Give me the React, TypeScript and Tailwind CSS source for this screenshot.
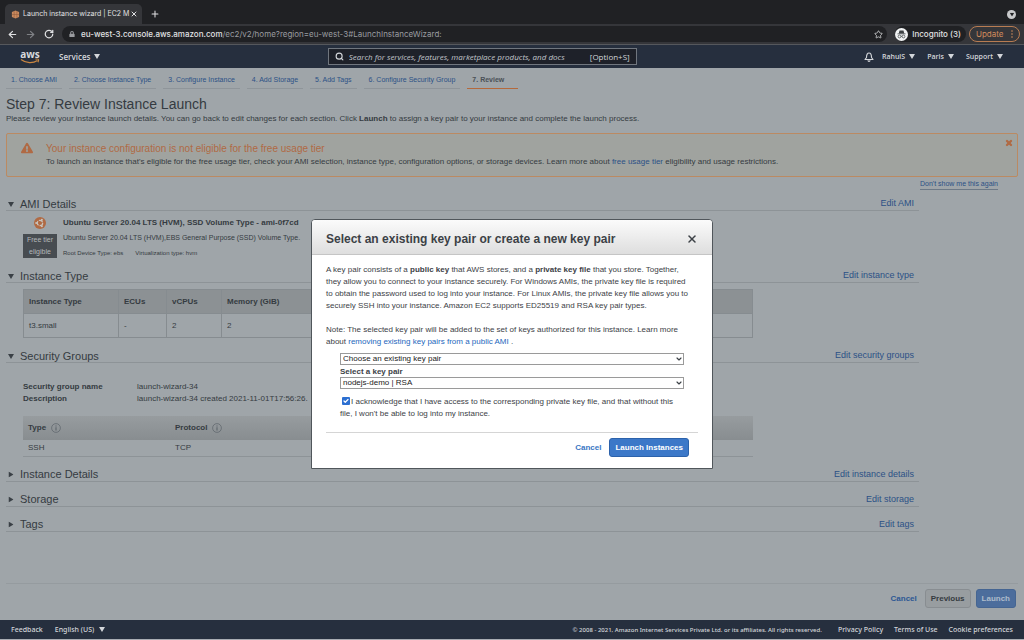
import type { ReactNode } from 'react'
import { ArrowLeft, ArrowRight, Check, ChevronDown, Plus, RotateCw, Search, Star, X } from 'lucide-react'
import { FaExclamationTriangle, FaLock } from 'react-icons/fa'

const steps = [
  '1. Choose AMI',
  '2. Choose Instance Type',
  '3. Configure Instance',
  '4. Add Storage',
  '5. Add Tags',
  '6. Configure Security Group',
]

function Caret({ className = '' }: { className?: string }) {
  return (
    <svg viewBox="0 0 6 5" className={`inline-block h-[5px] w-[6px] shrink-0 fill-current ${className}`} aria-hidden="true">
      <path d="M0 0h6L3 5z" />
    </svg>
  )
}

function InfoIcon() {
  return (
    <svg viewBox="0 0 10 10" className="size-[10px] shrink-0" fill="none" stroke="#5d646b" aria-hidden="true">
      <circle cx="5" cy="5" r="4.4" strokeWidth="0.7" />
      <path d="M5 4.2v3.2M5 2.4v1" strokeWidth="1.1" />
    </svg>
  )
}

function BrowserBar() {
  return (
    <header className="bg-[#202124] font-[Inter,sans-serif] text-[8px] leading-[10px] text-[#e0e1e3]">
      <div className="flex h-6 items-end pl-[5px] pr-2">
        <div className="flex h-5 w-[137px] items-center rounded-t-[5px] bg-[#35363a] pl-[6px] pr-[4px]">
          <svg viewBox="0 0 10 10" className="mr-[3px] size-[9px] shrink-0" aria-hidden="true">
            <path d="M1 2.2 5 .5l4 1.7v5.6L5 9.5 1 7.8z" fill="#c98a5e" />
            <path d="M3.5 1.5v7M6.5 1.5v7M1 5h8" stroke="#8f5a3c" strokeWidth="0.6" />
          </svg>
          <span className="flex-1 whitespace-nowrap text-[7px]">Launch instance wizard | EC2 M</span>
          <button aria-label="Close tab" className="shrink-0">
            <X className="size-[8px]" strokeWidth={3} />
          </button>
        </div>
        <button aria-label="New tab" className="mb-[5px] ml-2">
          <Plus className="size-[10px]" strokeWidth={2.5} />
        </button>
        <button aria-label="Search tabs" className="mb-[5px] ml-auto flex size-[9px] items-center justify-center rounded-full bg-[#c8c9cb] text-[#202124]">
          <Caret className="scale-75" />
        </button>
      </div>
      <div className="flex h-[21px] items-center border-b border-[#56585c] bg-[#35363a] pl-[7px] pr-[4px]">
        <button aria-label="Back">
          <ArrowLeft className="size-[11px]" strokeWidth={2.5} />
        </button>
        <button aria-label="Forward" className="ml-[7px] text-[#808286]">
          <ArrowRight className="size-[11px]" strokeWidth={2.5} />
        </button>
        <button aria-label="Reload" className="ml-2">
          <RotateCw className="size-[10px]" strokeWidth={3} />
        </button>
        <div className="ml-2 flex h-4 flex-1 items-center rounded-full bg-[#202124] pl-[7px] pr-[4px]">
          <FaLock className="mr-[6px] size-[6px] text-[#9a9ca0]" />
          <span className="font-medium">eu-west-3.console.aws.amazon.com</span>
          <span className="text-[#9a9ca0]">/ec2/v2/home?region=eu-west-3#LaunchInstanceWizard:</span>
          <button aria-label="Bookmark" className="ml-auto">
            <Star className="size-[9px]" strokeWidth={2} />
          </button>
        </div>
        <div className="ml-[8px] flex h-4 items-center gap-[4px] rounded-full bg-[#202124] pr-[5px] font-medium">
          <svg viewBox="0 0 13 13" className="size-[13px]" aria-hidden="true">
            <circle cx="6.5" cy="6.5" r="6.5" fill="#f1f3f4" />
            <path d="M4.5 2.5h4l.7 2.8H3.8zM2.500 5.500h8v.8h-8z" fill="#3c4043" />
            <g fill="none" stroke="#3c4043" strokeWidth="0.7">
              <circle cx="4.5" cy="8.5" r="1.4" />
              <circle cx="8.5" cy="8.5" r="1.4" />
              <path d="M5.9 8.3h1.2" />
            </g>
          </svg>
          Incognito (3)
        </div>
        <button className="ml-[3px] flex h-4 w-[51px] items-center justify-between rounded-full border border-[#b87c52] pl-[6px] pr-[6px] text-[#cf8b5c]">
          Update
          <svg viewBox="0 0 2 8" className="h-2 w-[2px] fill-current" aria-hidden="true">
            <circle cx="1" cy="1" r="0.8" />
            <circle cx="1" cy="4" r="0.8" />
            <circle cx="1" cy="7" r="0.8" />
          </svg>
        </button>
      </div>
    </header>
  )
}

function ConsoleNav() {
  return (
    <nav className="flex h-[23px] items-center bg-[#262f3e] pl-5 pr-[21px] font-['Open_Sans',sans-serif] text-[7px] font-semibold leading-[10px] text-[#d3d6da]">
      <a href="#" aria-label="aws" className="flex w-5 flex-col items-center pt-px text-[#d8dadd]">
        <span className="text-[10px] font-bold leading-[7px]">aws</span>
        <svg viewBox="0 0 20 6" className="h-[6px] w-5" fill="none" stroke="#c98642" strokeWidth="1.2" aria-hidden="true">
          <path d="M1 1.5c5 4 12 4 16.5 1M15.5 1.2c3-.6 3.8 0 2.5 3" />
        </svg>
      </a>
      <button className="ml-[19px] flex items-center gap-1 text-[8px]">
        Services <Caret />
      </button>
      <div className="ml-auto flex h-[17px] w-[309px] items-center border border-[#70767e] bg-[#1e2129] px-[6px] text-[8px]">
        <Search className="mr-[5px] size-[9px] shrink-0" strokeWidth={3} />
        <input
          aria-label="Search"
          placeholder="Search for services, features, marketplace products, and docs"
          className="min-w-0 flex-1 bg-transparent font-medium italic outline-none placeholder:text-[#c4c8cd]"
        />
        <span className="font-medium">[Option+S]</span>
      </div>
      <div className="ml-auto flex items-center gap-[12px]">
        <div className="flex items-center gap-[8px]">
          <button aria-label="Notifications">
            <svg viewBox="0 0 10 10" className="size-[10px]" fill="none" stroke="currentColor" strokeWidth="1.1" strokeLinejoin="round" aria-hidden="true">
              <path d="M1 7.5 2.5 5.5C2.5 2.5 3.5 1 5 1s2.500 1.500 2.500 4.500L9 7.500zM4 8.200c0 1.500 2 1.500 2 0" />
            </svg>
          </button>
          <button className="flex items-center gap-1">RahulS <Caret /></button>
        </div>
        <button className="flex items-center gap-1">Paris <Caret /></button>
        <button className="flex items-center gap-1">Support <Caret /></button>
      </div>
    </nav>
  )
}

function Section({ title, edit, open = false, children }: { title: string; edit: string; open?: boolean; children?: ReactNode }) {
  return (
    <section>
      <div className="flex h-[13px] items-center border-b border-[#8d9397] pl-[2px] pr-[5px]">
        <button aria-label={title} aria-expanded={open} className="flex w-3 text-[#3a4046]">
          <Caret className={open ? '' : '-rotate-90'} />
        </button>
        <h2 className="text-[11px]">{title}</h2>
        <a href="#" className="ml-auto text-[9px] text-[#2c5186]">{edit}</a>
      </div>
      {children}
    </section>
  )
}

function KeyPairSelect({ id, value }: { id: string; value: string }) {
  return (
    <div className="relative">
      <select id={id} aria-label={value} className="block h-[12px] w-full appearance-none border border-[#9a9a9a] bg-white px-[2px] text-[8px] leading-[10px] text-[#222]">
        <option>{value}</option>
      </select>
      <ChevronDown className="pointer-events-none absolute right-px top-[2px] size-2" strokeWidth={3.5} />
    </div>
  )
}

function KeyPairDialog() {
  return (
    <div role="dialog" aria-labelledby="dialog-title" className="w-[402px] rounded-t-[4px] border border-[#50565b] bg-white text-[8px] leading-3 text-[#3c4146]">
      <div className="flex h-[35px] items-center justify-between rounded-t-[3px] border-b border-[#c5c5c5] bg-linear-to-b from-[#fbfbfb] to-[#dedede] pl-[14px] pr-[14px] pt-[3px]">
        <h2 id="dialog-title" className="text-[12px] font-bold">Select an existing key pair or create a new key pair</h2>
        <button aria-label="Close">
          <X className="size-[12px]" strokeWidth={3} />
        </button>
      </div>
      <div className="px-[14px] pt-[9px]">
        <p>
          A key pair consists of a <b>public key</b> that AWS stores, and a <b>private key file</b> that you store. Together,
          <br />
          they allow you to connect to your instance securely. For Windows AMIs, the private key file is required
          <br />
          to obtain the password used to log into your instance. For Linux AMIs, the private key file allows you to
          <br />
          securely SSH into your instance. Amazon EC2 supports ED25519 and RSA key pair types.
        </p>
        <p className="mt-3">
          Note: The selected key pair will be added to the set of keys authorized for this instance. Learn more
          <br />
          about <a href="#" className="text-[#2467bd]">removing existing key pairs from a public AMI</a> .
        </p>
        <div className="mt-[5px] pl-[14px] pr-[14px]">
          <KeyPairSelect id="mode" value="Choose an existing key pair" />
          <label htmlFor="pair" className="block pt-px font-bold leading-[11px]">Select a key pair</label>
          <KeyPairSelect id="pair" value="nodejs-demo | RSA" />
          <label className="mt-[7px] block">
            <span className="relative ml-[2px] mr-px inline-block size-2 align-[-1px]">
              <input type="checkbox" defaultChecked className="block size-2 appearance-none rounded-[1px] bg-[#2c6fd1]" />
              <Check className="pointer-events-none absolute inset-px size-[6px] text-white" strokeWidth={5} />
            </span>
            I acknowledge that I have access to the corresponding private key file, and that without this
            <br />
            file, I won't be able to log into my instance.
          </label>
        </div>
        <div className="mt-3 flex items-center justify-end gap-2 border-t border-[#d5d5d5] pb-[11px] pr-[9px] pt-[5px] font-bold">
          <button className="text-[#3a76c4]">Cancel</button>
          <button className="h-[19px] rounded-[3px] border border-[#2c62ab] bg-[#3c78c8] px-[5px] text-white">Launch Instances</button>
        </div>
      </div>
    </div>
  )
}

export default function App() {
  return (
    <div className="flex min-h-screen flex-col bg-[#9fa5a9] font-['Liberation_Sans',Arial,sans-serif] text-[#353b41]">
      <BrowserBar />
      <ConsoleNav />
      <main className="relative flex flex-1 flex-col px-[6px]">
        <ol className="flex gap-[7px] pt-[4px] text-[7px] leading-[16px] text-[#2c5186]">
          {steps.map((step) => (
            <li key={step} className="border-b border-[#8f959a] px-[5px]">
              <a href="#">{step}</a>
            </li>
          ))}
          <li className="border-b border-[#b4693c] pl-[5px] pr-[14px] font-bold text-[#4a5056]">7. Review</li>
        </ol>
        <h1 className="mt-[7px] text-[14px] leading-[16px]">Step 7: Review Instance Launch</h1>
        <p className="mt-px text-[8px] leading-[12px]">
          Please review your instance launch details. You can go back to edit changes for each section. Click <b>Launch</b> to assign a key pair to your instance and complete the launch process.
        </p>
        <div className="mt-[8px] flex h-[44px] items-start rounded-[2px] border border-[#bb8a62] bg-[#a0a39f] pl-[14px] pr-[4px] pt-[8px]">
          <FaExclamationTriangle className="size-[12px] text-[#b06a44]" />
          <div className="ml-[13px] flex-1">
            <h3 className="text-[10px] leading-[14px] text-[#b06a44]">Your instance configuration is not eligible for the free usage tier</h3>
            <p className="text-[8px] leading-[12px]">
              To launch an instance that's eligible for the free usage tier, check your AMI selection, instance type, configuration options, or storage devices. Learn more about{' '}
              <a href="#" className="text-[#2c5186]">free usage tier</a> eligibility and usage restrictions.
            </p>
          </div>
          <button aria-label="Dismiss" className="-mt-[3px] text-[#b06a44]">
            <X className="size-[8px]" strokeWidth={7} />
          </button>
        </div>
        <a href="#" className="mr-5 mt-[2px] self-end border-b border-[#6d7986] text-[7px] leading-[10px] text-[#2c5186]">Don't show me this again</a>

        <div className="mr-[99px] mt-2">
          <Section title="AMI Details" edit="Edit AMI" open>
            <div className="flex h-[59px] pl-[17px] pt-[6px]">
              <div className="flex w-[34px] flex-col items-center">
                <svg viewBox="0 0 12 12" className="mb-[5px] size-[12px]" fill="none" aria-hidden="true">
                  <circle cx="6" cy="6" r="6" fill="#b06a44" />
                  <circle cx="6" cy="6" r="2.7" stroke="#c9c4bd" strokeWidth="1.2" strokeDasharray="4.6 1" />
                  <circle cx="2.2" cy="6" r="1" fill="#c9c4bd" />
                  <circle cx="7.9" cy="2.7" r="1" fill="#c9c4bd" />
                  <circle cx="7.9" cy="9.3" r="1" fill="#c9c4bd" />
                </svg>
                <span className="h-6 w-full bg-[#474c51] text-center text-[7px] leading-3 text-[#b4b8bb]">Free tier eligible</span>
              </div>
              <div className="ml-[6px] whitespace-nowrap">
                <h3 className="text-[8px] font-bold leading-3">Ubuntu Server 20.04 LTS (HVM), SSD Volume Type - ami-0f7cd</h3>
                <p className="mt-[3px] text-[7px] leading-3">Ubuntu Server 20.04 LTS (HVM),EBS General Purpose (SSD) Volume Type.</p>
                <p className="mt-[3px] flex gap-[12px] text-[6px] leading-3">
                  <span>Root Device Type: ebs</span>
                  <span>Virtualization type: hvm</span>
                </p>
              </div>
            </div>
          </Section>

          <Section title="Instance Type" edit="Edit instance type" open>
            <table className="ml-[17px] mt-[6px] w-4/5 table-fixed border-collapse text-left text-[8px] leading-3">
              <thead>
                <tr className="h-6 bg-[#8c9194]">
                  <th className="w-[95px] border border-[#868c90] px-[5px]">Instance Type</th>
                  <th className="w-[48px] border border-[#868c90] px-[5px]">ECUs</th>
                  <th className="w-[55px] border border-[#868c90] px-[5px]">vCPUs</th>
                  <th className="border border-[#868c90] px-[5px]">Memory (GiB)</th>
                </tr>
              </thead>
              <tbody>
                <tr className="h-6">
                  <td className="border border-[#868c90] px-[5px]">t3.small</td>
                  <td className="border border-[#868c90] px-[5px]">-</td>
                  <td className="border border-[#868c90] px-[5px]">2</td>
                  <td className="border border-[#868c90] px-[5px]">2</td>
                </tr>
              </tbody>
            </table>
          </Section>

          <div className="h-3" />
          <Section title="Security Groups" edit="Edit security groups" open>
            <dl className="grid grid-cols-[114px_1fr] pl-[17px] pt-[18px] text-[8px] leading-3">
              <dt className="font-bold">Security group name</dt>
              <dd>launch-wizard-34</dd>
              <dt className="font-bold">Description</dt>
              <dd>launch-wizard-34 created 2021-11-01T17:56:26.</dd>
            </dl>
            <table className="ml-[17px] mt-[11px] w-4/5 table-fixed border-collapse text-left text-[8px] leading-3">
              <thead>
                <tr className="h-6 bg-linear-to-b from-[#979c9f] to-[#888d90]">
                  <th className="w-[147px] px-[5px]">
                    <span className="flex items-center gap-[5px]">Type <InfoIcon /></span>
                  </th>
                  <th className="px-[5px]">
                    <span className="flex items-center gap-[5px]">Protocol <InfoIcon /></span>
                  </th>
                </tr>
              </thead>
              <tbody>
                <tr className="h-4 border-b border-[#8d9397]">
                  <td className="px-[5px]">SSH</td>
                  <td className="px-[5px]">TCP</td>
                </tr>
              </tbody>
            </table>
          </Section>

          <div className="mt-3 flex flex-col gap-3">
            <Section title="Instance Details" edit="Edit instance details" />
            <Section title="Storage" edit="Edit storage" />
            <Section title="Tags" edit="Edit tags" />
          </div>
        </div>

        <div className="mb-3 mt-auto flex items-center justify-end gap-[5px] border-t border-[#959b9f] pr-[2px] pt-[5px] text-[8px] font-bold leading-3">
          <button className="mr-[3px] text-[#2c5794]">Cancel</button>
          <button className="h-[19px] rounded-[3px] border border-[#888d91] bg-[#989da0] px-[5px]">Previous</button>
          <button className="h-[19px] rounded-[3px] border border-[#456592] bg-[#4c6d9c] px-[5px] text-[#aebccb]">Launch</button>
        </div>

        <div className="absolute inset-0 flex items-center justify-center">
          <KeyPairDialog />
        </div>
      </main>
      <footer className="flex h-5 items-center border-b border-[#a9adb3] bg-[#262f3e] pl-[11px] pr-[11px] font-['Noto_Sans',sans-serif] text-[7px] font-medium leading-[10px] text-[#d3d6da]">
        <button>Feedback</button>
        <button className="ml-[12px] flex items-center gap-[5px]">English (US) <Caret /></button>
        <span className="ml-auto text-[6px]">© 2008 - 2021, Amazon Internet Services Private Ltd. or its affiliates. All rights reserved.</span>
        <a href="#" className="ml-[16px]">Privacy Policy</a>
        <a href="#" className="ml-[11px]">Terms of Use</a>
        <a href="#" className="ml-[11px]">Cookie preferences</a>
      </footer>
    </div>
  )
}
